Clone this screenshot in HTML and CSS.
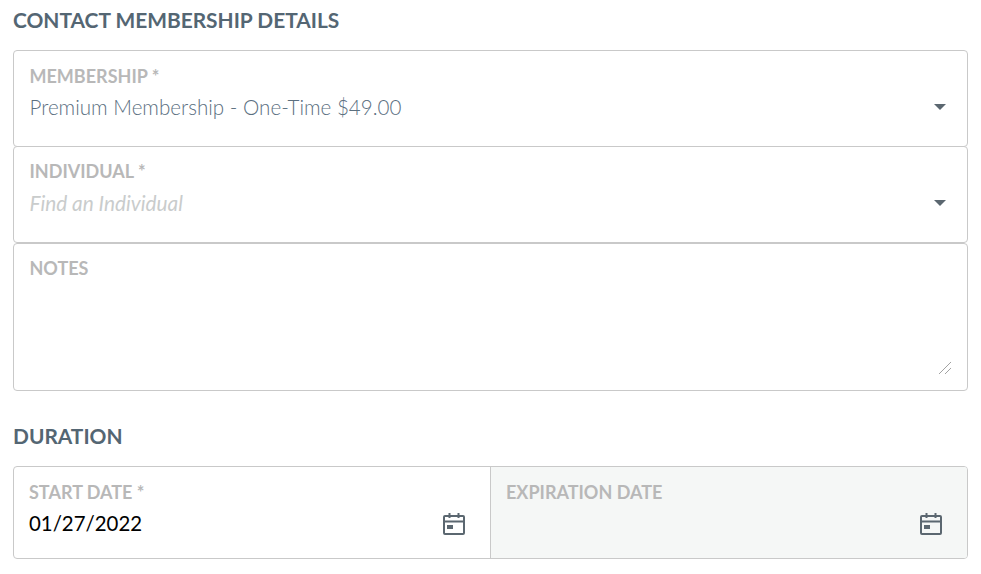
FILE: index.html
```html
<!DOCTYPE html>
<html lang="en">
<head>
    <meta name="viewport" content="width=device-width, initial-scale=1.0">
    <title>Contact Membership Details</title>
    <link rel="stylesheet" href="styles.css">
</head>
<body>
    <h2 class="section-title">CONTACT MEMBERSHIP DETAILS</h2>

    <div class="field field-select field-top">
        <div class="field-label">MEMBERSHIP *</div>
        <div class="select-value">Premium Membership - One-Time $49.00</div>
        <span class="caret"></span>
    </div>
    <div class="field field-select field-middle">
        <div class="field-label">INDIVIDUAL *</div>
        <div class="select-placeholder">Find an Individual</div>
        <span class="caret"></span>
    </div>
    <div class="field field-notes">
        <label class="field-label" for="notes">NOTES</label>
        <textarea id="notes" class="notes-input"></textarea>
        <svg class="grip" viewBox="0 0 14 14" width="14" height="14" stroke="#444" stroke-width="1" stroke-dasharray="1.414 1.414">
            <path d="M1.500 13.500L13.500 1.500M7.500 13.500L13.500 7.500"></path>
        </svg>
    </div>

    <h2 class="section-title section-duration">DURATION</h2>

    <div class="date-row">
        <div class="date-cell">
            <div class="field-label">START DATE *</div>
            <div class="date-line">
                <span class="date-value">01/27/2022</span>
                <svg class="calendar" viewBox="0 0 24 24" width="24" height="24" fill="none" stroke="#5b6770" stroke-width="2">
                    <rect x="2" y="4" width="20" height="18" rx="1"></rect>
                    <path d="M2 9.500H22M7.500 1V6M16.500 1V6"></path>
                    <rect x="5" y="13" width="6" height="4" fill="#5b6770" stroke="none"></rect>
                </svg>
            </div>
        </div>
        <div class="date-cell date-disabled">
            <div class="field-label">EXPIRATION DATE</div>
            <div class="date-line">
                <span class="date-value"></span>
                <svg class="calendar" viewBox="0 0 24 24" width="24" height="24" fill="none" stroke="#5b6770" stroke-width="2">
                    <rect x="2" y="4" width="20" height="18" rx="1"></rect>
                    <path d="M2 9.500H22M7.500 1V6M16.500 1V6"></path>
                    <rect x="5" y="13" width="6" height="4" fill="#5b6770" stroke="none"></rect>
                </svg>
            </div>
        </div>
    </div>
</body>
</html>
```

FILE: styles.css
```css
* {
    box-sizing: border-box;
}
body {
    margin: 0;
    padding: 0 13px;
    background-color: #fff;
    font-family: Lato, "Open Sans", sans-serif;
    color: #5b6f7f;
}
.section-title {
    margin: 0;
    padding-top: 7px;
    height: 50px;
    font-size: 20.900px;
    line-height: 25px;
    font-weight: 700;
    color: #546673;
}
.section-duration {
    height: 75px;
    padding-top: 32px;
}
.field {
    position: relative;
    border: 1px solid #c9c9c9;
    border-radius: 4px;
    padding: 14px 15.500px 0;
    background-color: #fff;
}
.field-select {
    height: 97px;
}
.field-middle {
    margin-top: -1px;
    padding-top: 13px;
}
.field-notes {
    height: 148px;
    padding-top: 13px;
    display: flex;
    flex-direction: column;
}
.field-label {
    display: block;
    font-size: 18px;
    line-height: 22px;
    font-weight: 700;
    color: #b8b8b8;
}
.select-value,
.select-placeholder {
    margin-top: 8px;
    font-size: 20.600px;
    line-height: 24px;
    font-weight: 300;
}
.select-placeholder {
    margin-top: 9px;
    font-size: 20.800px;
    font-style: italic;
    font-weight: 400;
    color: #c9cccc;
}
.caret {
    position: absolute;
    top: 53px;
    right: 21px;
    width: 0;
    height: 0;
    border-left: 6px solid transparent;
    border-right: 6px solid transparent;
    border-top: 6px solid #5b6770;
}
.notes-input {
    flex: 1;
    border: none;
    outline: none;
    padding: 0;
    resize: none;
    font-family: inherit;
    background: transparent;
}
.grip {
    position: absolute;
    right: 15px;
    bottom: 16px;
}
.date-row {
    display: flex;
    height: 93px;
    border: 1px solid #c9c9c9;
    border-radius: 4px;
    overflow: hidden;
}
.date-cell {
    flex: 1;
    padding: 14px 24px 0 15px;
}
.date-disabled {
    border-left: 1px solid #c9c9c9;
    background-color: #f5f7f6;
}
.date-line {
    display: flex;
    justify-content: space-between;
    align-items: center;
    height: 30px;
    margin-top: 6px;
}
.date-value {
    margin-bottom: 2px;
    font-size: 20.400px;
    line-height: 24px;
    color: #000;
}
.calendar {
    display: block;
}
```
